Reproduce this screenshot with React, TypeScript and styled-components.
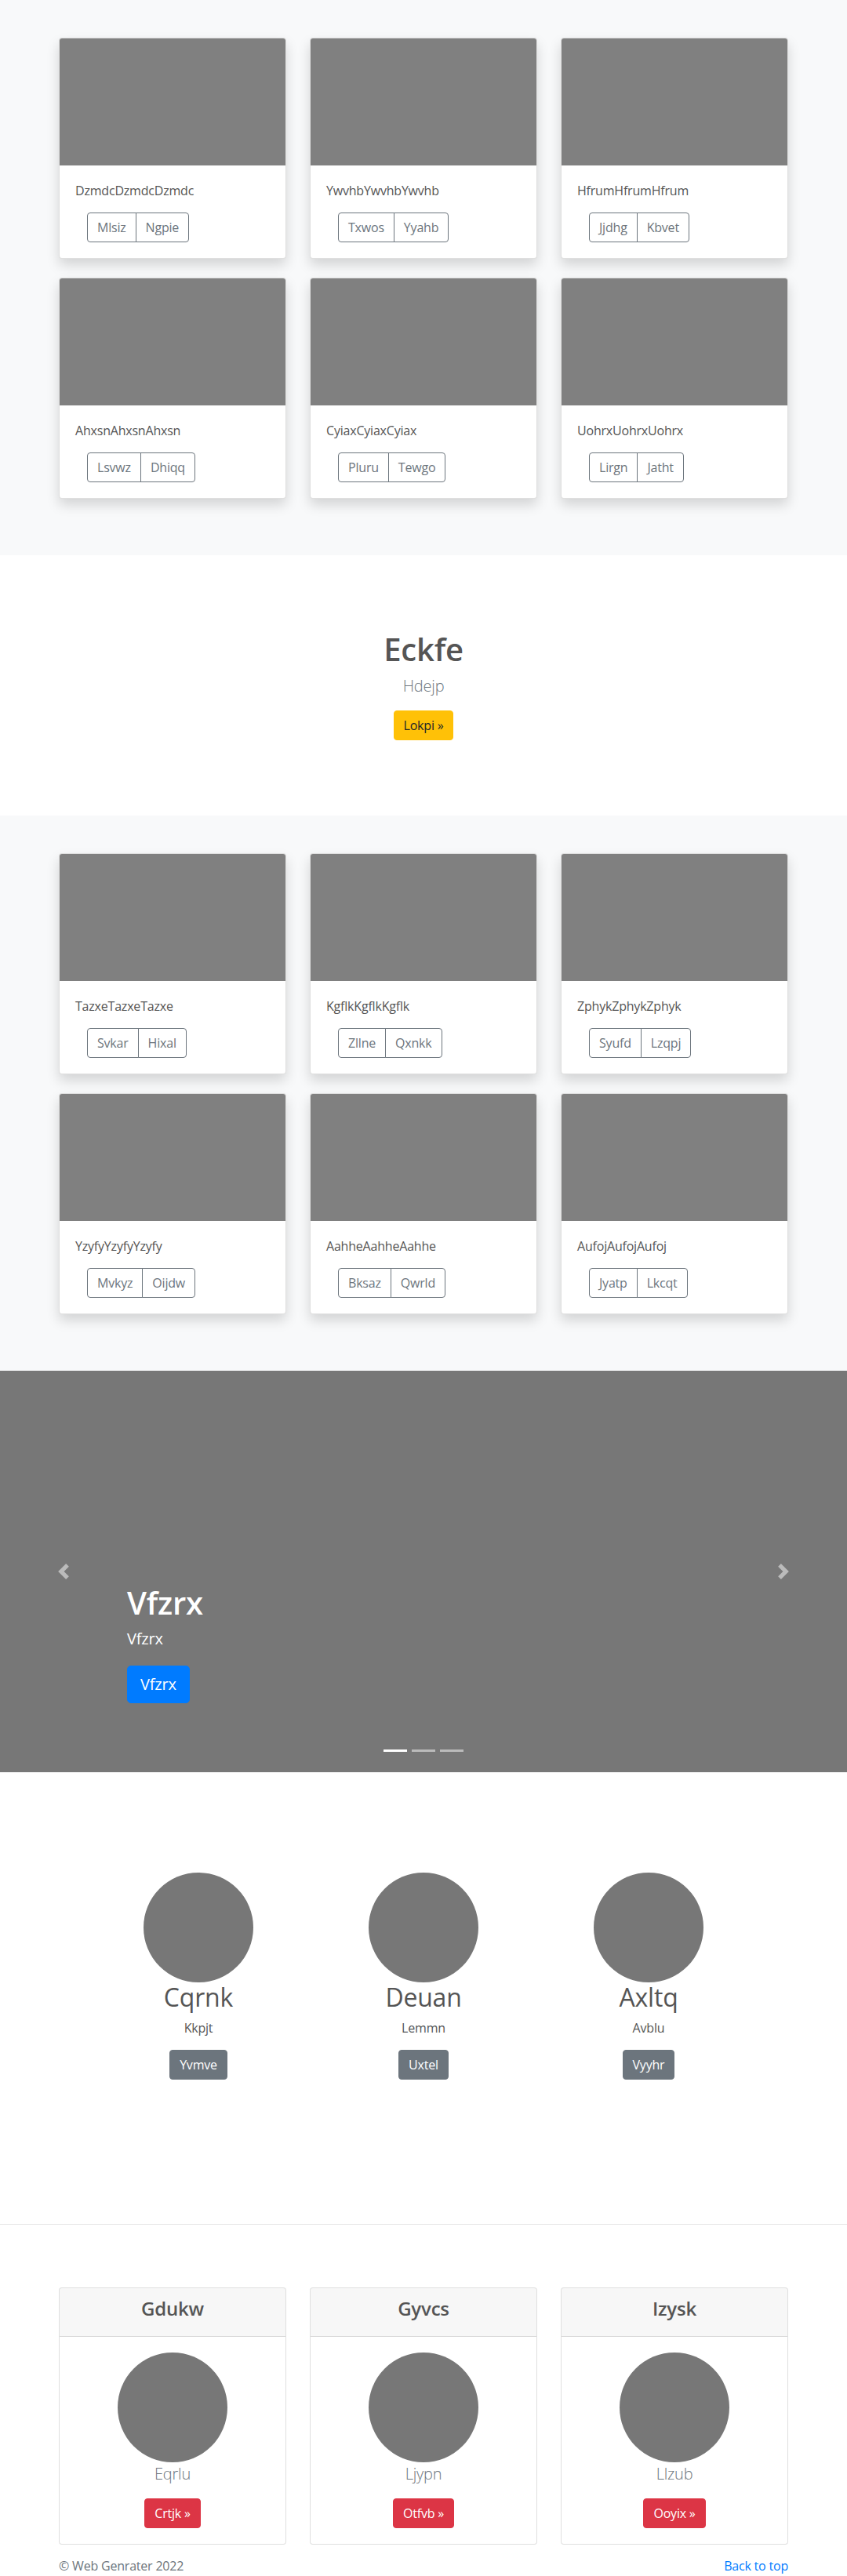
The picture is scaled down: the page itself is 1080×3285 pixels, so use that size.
import React from "react";
import styled, { createGlobalStyle } from "styled-components";

const Global = createGlobalStyle`
  html, body { margin: 0; padding: 0; }
  body {
    font-family: "Open Sans", "Noto Sans", Arial, sans-serif;
    font-size: 16px;
    line-height: 1.5;
    letter-spacing: -0.2px;
    color: #555;
    background: #fff;
  }
  *, *::before, *::after { box-sizing: border-box; }
`;

const Container = styled.div`
  width: 960px;
  margin: 0 auto;
  padding: 0 15px;
`;

const Album = styled.section`
  background: #f8f9fa;
  padding: 48px 0;
`;

const CardGrid = styled.div`
  display: grid;
  grid-template-columns: repeat(3, 1fr);
  column-gap: 30px;
  row-gap: 24px;
  padding-bottom: 24px;
`;

const Card = styled.div`
  background: #fff;
  border: 1px solid rgba(0, 0, 0, 0.125);
  border-radius: 4px;
  box-shadow: 0 8px 16px rgba(0, 0, 0, 0.15);
  overflow: hidden;
`;

const Thumb = styled.div`
  height: 162px;
  background: #808080;
`;

const CardBody = styled.div`
  padding: 20px;
`;

const CardText = styled.p`
  margin: 0 0 16px;
`;

const BtnGroup = styled.div`
  display: inline-flex;
  margin-left: 15px;
`;

const OutlineBtn = styled.button`
  font: inherit;
  font-size: 16px;
  line-height: 1.5;
  letter-spacing: -0.2px;
  padding: 6px 12px;
  background: transparent;
  color: #6c757d;
  border: 1px solid #6c757d;
  border-radius: 0;
  &:first-child { border-radius: 4px 0 0 4px; }
  &:last-child { border-radius: 0 4px 4px 0; margin-left: -1px; }
`;

const Hero = styled.section`
  background: #fff;
  padding: 96px 0;
  text-align: center;
`;

const HeroTitle = styled.h1`
  font-size: 40px;
  font-weight: 600;
  line-height: 1.2;
  margin: 0 0 8px;
  color: #555;
`;

const Lead = styled.p`
  font-size: 20px;
  font-weight: 300;
  line-height: 1.5;
  color: #6c757d;
  margin: 0 0 16px;
`;

const SolidBtn = styled.button<{ $bg: string; $fg: string; $lg?: boolean }>`
  display: inline-block;
  font: inherit;
  letter-spacing: -0.2px;
  font-size: ${(p) => (p.$lg ? "20px" : "16px")};
  line-height: 1.5;
  padding: ${(p) => (p.$lg ? "8px 16px" : "6px 12px")};
  border-radius: ${(p) => (p.$lg ? "5px" : "4px")};
  background: ${(p) => p.$bg};
  border: 1px solid ${(p) => p.$bg};
  color: ${(p) => p.$fg};
`;

const Carousel = styled.section`
  position: relative;
  height: 512px;
  background: #777;
  overflow: hidden;
`;

const Caption = styled.div`
  position: absolute;
  left: 15%;
  right: 15%;
  bottom: 48px;
  padding: 20px 0;
  color: #fff;
  text-align: left;
`;

const CaptionTitle = styled.h1`
  font-size: 40px;
  font-weight: 600;
  line-height: 1.2;
  margin: 0 0 8px;
`;

const CaptionText = styled.p`
  font-size: 20px;
  line-height: 1.4;
  margin: 0 0 20px;
`;

const Control = styled.a<{ $side: "left" | "right" }>`
  position: absolute;
  top: 0;
  bottom: 0;
  ${(p) => p.$side}: 0;
  width: 15%;
  display: flex;
  align-items: center;
  justify-content: center;
  opacity: 0.5;
`;

const Indicators = styled.ol`
  position: absolute;
  left: 0;
  right: 0;
  bottom: 0;
  margin: 0 0 16px;
  padding: 0;
  list-style: none;
  display: flex;
  justify-content: center;
`;

const Indicator = styled.li<{ $active?: boolean }>`
  width: 30px;
  height: 3px;
  margin: 0 3px;
  background: #fff;
  box-sizing: content-box;
  border-top: 10px solid transparent;
  border-bottom: 10px solid transparent;
  background-clip: padding-box;
  opacity: ${(p) => (p.$active ? 1 : 0.5)};
`;

const Marketing = styled.section`
  padding: 128px 0 184px;
`;

const MarketingRow = styled.div`
  display: grid;
  grid-template-columns: repeat(3, 287px);
  justify-content: center;
`;

const Feature = styled.div`
  display: flex;
  flex-direction: column;
  align-items: center;
  text-align: center;
`;

const Circle = styled.div`
  width: 140px;
  height: 140px;
  border-radius: 50%;
  background: #777;
  flex: none;
`;

const FeatureTitle = styled.h2`
  font-size: 32px;
  font-weight: 400;
  line-height: 1.2;
  margin: 0 0 8px;
`;

const FeatureText = styled.p`
  margin: 0 0 16px;
`;

const Divider = styled.hr`
  margin: 0;
  border: 0;
  border-top: 1px solid rgba(0, 0, 0, 0.1);
`;

const Pricing = styled.section`
  padding-top: 80px;
`;

const PricingGrid = styled.div`
  display: grid;
  grid-template-columns: repeat(3, 1fr);
  column-gap: 30px;
`;

const PriceCard = styled.div`
  border: 1px solid rgba(0, 0, 0, 0.125);
  border-radius: 4px;
  background: #fff;
  text-align: center;
  overflow: hidden;
`;

const PriceHeader = styled.div`
  padding: 12px 20px;
  background: rgba(0, 0, 0, 0.03);
  border-bottom: 1px solid rgba(0, 0, 0, 0.125);
`;

const PriceTitle = styled.h4`
  font-size: 24px;
  font-weight: 600;
  line-height: 1.2;
  margin: 0 0 8px;
  color: #555;
`;

const PriceBody = styled.div`
  padding: 20px;
  display: flex;
  flex-direction: column;
  align-items: center;
`;

const Footer = styled.footer`
  padding-top: 15px;
`;

const FooterRow = styled.div`
  display: flex;
  justify-content: space-between;
  color: #6c757d;
`;

const FooterText = styled.p`
  margin: 0;
`;

const TopLink = styled.a`
  color: #007bff;
  text-decoration: none;
`;

type AlbumCard = { title: string; a: string; b: string };

const album1: AlbumCard[] = [
  { title: "DzmdcDzmdcDzmdc", a: "Mlsiz", b: "Ngpie" },
  { title: "YwvhbYwvhbYwvhb", a: "Txwos", b: "Yyahb" },
  { title: "HfrumHfrumHfrum", a: "Jjdhg", b: "Kbvet" },
  { title: "AhxsnAhxsnAhxsn", a: "Lsvwz", b: "Dhiqq" },
  { title: "CyiaxCyiaxCyiax", a: "Pluru", b: "Tewgo" },
  { title: "UohrxUohrxUohrx", a: "Lirgn", b: "Jatht" },
];

const album2: AlbumCard[] = [
  { title: "TazxeTazxeTazxe", a: "Svkar", b: "Hixal" },
  { title: "KgflkKgflkKgflk", a: "Zllne", b: "Qxnkk" },
  { title: "ZphykZphykZphyk", a: "Syufd", b: "Lzqpj" },
  { title: "YzyfyYzyfyYzyfy", a: "Mvkyz", b: "Oijdw" },
  { title: "AahheAahheAahhe", a: "Bksaz", b: "Qwrld" },
  { title: "AufojAufojAufoj", a: "Jyatp", b: "Lkcqt" },
];

const features = [
  { title: "Cqrnk", text: "Kkpjt", btn: "Yvmve" },
  { title: "Deuan", text: "Lemmn", btn: "Uxtel" },
  { title: "Axltq", text: "Avblu", btn: "Vyyhr" },
];

const prices = [
  { title: "Gdukw", text: "Eqrlu", btn: "Crtjk »" },
  { title: "Gyvcs", text: "Ljypn", btn: "Otfvb »" },
  { title: "Izysk", text: "Llzub", btn: "Ooyix »" },
];

const AlbumSection = ({ cards }: { cards: AlbumCard[] }) => (
  <Album>
    <Container>
      <CardGrid>
        {cards.map((c) => (
          <Card key={c.title}>
            <Thumb />
            <CardBody>
              <CardText>{c.title}</CardText>
              <BtnGroup>
                <OutlineBtn>{c.a}</OutlineBtn>
                <OutlineBtn>{c.b}</OutlineBtn>
              </BtnGroup>
            </CardBody>
          </Card>
        ))}
      </CardGrid>
    </Container>
  </Album>
);

const Chevron = ({ dir }: { dir: "prev" | "next" }) => (
  <svg width="20" height="20" viewBox="0 0 8 8" fill="#fff">
    {dir === "prev" ? (
      <path d="M5.25 0l-4 4 4 4 1.5-1.5L4.25 4l2.5-2.5L5.25 0z" />
    ) : (
      <path d="M2.75 0l-1.5 1.5L3.75 4l-2.5 2.5L2.75 8l4-4-4-4z" />
    )}
  </svg>
);

export default function App() {
  return (
    <>
      <Global />
      <AlbumSection cards={album1} />
      <Hero>
        <HeroTitle>Eckfe</HeroTitle>
        <Lead>Hdejp</Lead>
        <SolidBtn $bg="#ffc107" $fg="#212529">Lokpi »</SolidBtn>
      </Hero>
      <AlbumSection cards={album2} />
      <Carousel>
        <Control $side="left">
          <Chevron dir="prev" />
        </Control>
        <Control $side="right">
          <Chevron dir="next" />
        </Control>
        <Caption>
          <CaptionTitle>Vfzrx</CaptionTitle>
          <CaptionText>Vfzrx</CaptionText>
          <CaptionText>
            <SolidBtn $bg="#007bff" $fg="#fff" $lg>
              Vfzrx
            </SolidBtn>
          </CaptionText>
        </Caption>
        <Indicators>
          <Indicator $active />
          <Indicator />
          <Indicator />
        </Indicators>
      </Carousel>
      <Marketing>
        <MarketingRow>
          {features.map((f) => (
            <Feature key={f.title}>
              <Circle />
              <FeatureTitle>{f.title}</FeatureTitle>
              <FeatureText>{f.text}</FeatureText>
              <SolidBtn $bg="#6c757d" $fg="#fff">{f.btn}</SolidBtn>
            </Feature>
          ))}
        </MarketingRow>
      </Marketing>
      <Divider />
      <Pricing>
        <Container>
          <PricingGrid>
            {prices.map((p) => (
              <PriceCard key={p.title}>
                <PriceHeader>
                  <PriceTitle>{p.title}</PriceTitle>
                </PriceHeader>
                <PriceBody>
                  <Circle />
                  <Lead>{p.text}</Lead>
                  <SolidBtn $bg="#dc3545" $fg="#fff">{p.btn}</SolidBtn>
                </PriceBody>
              </PriceCard>
            ))}
          </PricingGrid>
        </Container>
        <Footer>
          <Container>
            <FooterRow>
              <FooterText>© Web Genrater 2022</FooterText>
              <TopLink href="#">Back to top</TopLink>
            </FooterRow>
          </Container>
        </Footer>
      </Pricing>
    </>
  );
}
